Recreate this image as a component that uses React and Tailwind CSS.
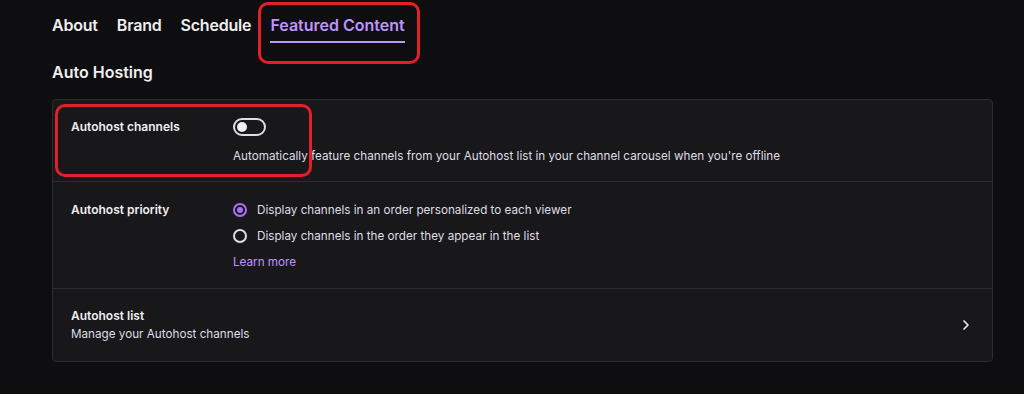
import { ChevronRight } from "lucide-react";

const tabs = ["About", "Brand", "Schedule"];

function Radio({ checked }) {
  return checked ? (
    <span className="w-[14px] h-[14px] rounded-full border-2 border-[#a970ff] flex items-center justify-center">
      <span className="w-[6px] h-[6px] rounded-full bg-[#a970ff]" />
    </span>
  ) : (
    <span className="w-[14px] h-[14px] rounded-full border-2 border-[#dedee3]" />
  );
}

export default function App() {
  return (
    <div
      className="w-[1024px] h-[394px] bg-[#0e0e10] text-[#efeff1] relative overflow-hidden"
      style={{ fontFamily: "Inter, 'Noto Sans', sans-serif" }}
    >
      <div className="pl-[52px] pr-[31px]">
        {/* tabs */}
        <div className="flex gap-[19px] pt-[13px] h-[54px]">
          {tabs.map((t) => (
            <div key={t} className="text-[16px] font-semibold leading-[24px] tracking-[-0.2px]">
              {t}
            </div>
          ))}
          <div className="flex flex-col">
            <div className="text-[16px] font-semibold leading-[24px] text-[#bf94ff]">
              Featured Content
            </div>
            <div className="h-[2px] bg-[#bf94ff] mt-[4px]" />
          </div>
        </div>

        <h2 className="text-[16px] font-semibold leading-[24px] mt-[6px]">Auto Hosting</h2>

        {/* card */}
        <div className="mt-[15px] bg-[#18181b] border border-[#2c2c30] rounded-[4px]">
          <div className="flex px-[18px] pt-[18px] pb-[16px] border-b border-[#2c2c30]">
            <div className="w-[162px] text-[12px] font-semibold leading-[18px]">
              Autohost channels
            </div>
            <div className="flex flex-col">
              <div className="w-[33px] h-[18px] rounded-full border-2 border-[#dedee3] flex items-center px-[2px]">
                <span className="w-[10px] h-[10px] rounded-full bg-[#efeff1]" />
              </div>
              <div className="text-[11.7px] leading-[18px] text-[#dedee3] mt-[11px]">
                Automatically feature channels from your Autohost list in your channel carousel when you're offline
              </div>
            </div>
          </div>

          <div className="flex px-[18px] pt-[19px] pb-[17px] border-b border-[#2c2c30]">
            <div className="w-[162px] text-[12px] font-semibold leading-[18px]">
              Autohost priority
            </div>
            <div className="flex flex-col gap-[8px]">
              <div className="flex items-center gap-[10px] text-[11.7px] leading-[18px] text-[#dedee3]">
                <Radio checked />
                Display channels in an order personalized to each viewer
              </div>
              <div className="flex items-center gap-[10px] text-[11.7px] leading-[18px] text-[#dedee3]">
                <Radio />
                Display channels in the order they appear in the list
              </div>
              <div className="text-[11.7px] leading-[18px] text-[#bf94ff]">Learn more</div>
            </div>
          </div>

          <div className="flex items-center justify-between px-[18px] pt-[18px] pb-[18px]">
            <div className="flex flex-col">
              <div className="text-[12px] font-semibold leading-[18px]">Autohost list</div>
              <div className="text-[11.7px] leading-[18px] text-[#dedee3]">
                Manage your Autohost channels
              </div>
            </div>
            <ChevronRight className="w-[16px] h-[16px] text-[#efeff1]" strokeWidth={2.5} />
          </div>
        </div>
      </div>

      {/* red annotation boxes */}
      <div className="absolute left-[258px] top-[2px] w-[162px] h-[62px] border-[3px] border-[#e3202a] rounded-[10px]" />
      <div className="absolute left-[55px] top-[104px] w-[257px] h-[73px] border-[3px] border-[#e3202a] rounded-[10px]" />
    </div>
  );
}
